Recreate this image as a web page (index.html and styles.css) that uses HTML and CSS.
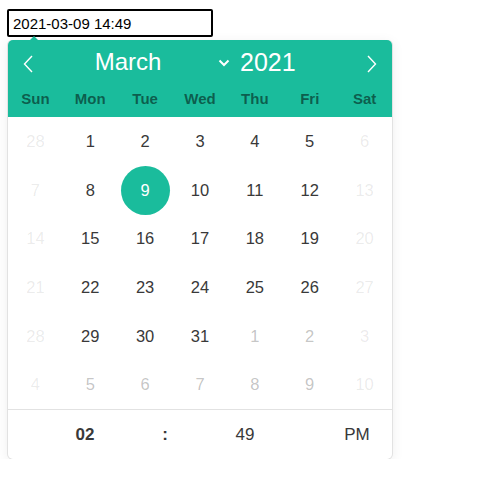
FILE: index.html
```html
<!DOCTYPE html>
<html lang="en">
<head>
  <meta charset="UTF-8" />
  <title>Date picker</title>
  <link rel="stylesheet" href="styles.css">
</head>
<body>
  <input type="text" class="date-input" value="2021-03-09 14:49">

  <div class="calendar">
    <div class="cal-header">
      <div class="month-nav">
        <span class="nav-arrow prev">
          <svg width="10" height="18" viewBox="0 0 10 18"><path d="M9 1 L1.5 9 L9 17" fill="none" stroke="#fff" stroke-width="1.4"/></svg>
        </span>
        <div class="current-month">
          <span class="month-name">March</span>
          <svg class="month-caret" width="12" height="8" viewBox="0 0 12 8"><path d="M1.5 1.5 L6 6 L10.5 1.5" fill="none" stroke="#fff" stroke-width="2"/></svg>
          <span class="year">2021</span>
        </div>
        <span class="nav-arrow next">
          <svg width="10" height="18" viewBox="0 0 10 18"><path d="M1 1 L8.5 9 L1 17" fill="none" stroke="#fff" stroke-width="1.4"/></svg>
        </span>
      </div>
      <div class="weekdays">
        <span>Sun</span><span>Mon</span><span>Tue</span><span>Wed</span><span>Thu</span><span>Fri</span><span>Sat</span>
      </div>
    </div>

    <div class="days">
      <span class="day disabled">28</span><span class="day">1</span><span class="day">2</span><span class="day">3</span><span class="day">4</span><span class="day">5</span><span class="day disabled">6</span>
      <span class="day disabled">7</span><span class="day">8</span><span class="day selected">9</span><span class="day">10</span><span class="day">11</span><span class="day">12</span><span class="day disabled">13</span>
      <span class="day disabled">14</span><span class="day">15</span><span class="day">16</span><span class="day">17</span><span class="day">18</span><span class="day">19</span><span class="day disabled">20</span>
      <span class="day disabled">21</span><span class="day">22</span><span class="day">23</span><span class="day">24</span><span class="day">25</span><span class="day">26</span><span class="day disabled">27</span>
      <span class="day disabled">28</span><span class="day">29</span><span class="day">30</span><span class="day">31</span><span class="day next-month">1</span><span class="day next-month">2</span><span class="day disabled">3</span>
      <span class="day disabled">4</span><span class="day next-month">5</span><span class="day next-month">6</span><span class="day next-month">7</span><span class="day next-month">8</span><span class="day next-month">9</span><span class="day disabled">10</span>
    </div>

    <div class="time">
      <span class="hour">02</span>
      <span class="separator">:</span>
      <span class="minute">49</span>
      <span class="ampm">PM</span>
    </div>
  </div>
</body>
</html>
```

FILE: styles.css
```css
body {
  margin: 0;
  padding: 9px 0 0 7px;
  font-family: "Liberation Sans", Arial, sans-serif;
  background-color: #ffffff;
}
.date-input {
  display: block;
  box-sizing: border-box;
  width: 206px;
  height: 28px;
  margin: 0;
  padding: 0 4px;
  border: 2px solid #000;
  border-radius: 2px;
  font-family: "Liberation Sans", Arial, sans-serif;
  font-size: 15px;
  color: #000;
}
.calendar {
  position: relative;
  width: 384px;
  margin: 3px 0 0 1px;
  background-color: #fff;
  border-radius: 5px;
  box-shadow: 1px 0 0 #e2e2e2, -1px 0 0 #e2e2e2, 0 1px 0 #dcdcdc, 0 3px 13px rgba(0,0,0,0.08);
}
.calendar::before {
  content: "";
  position: absolute;
  top: -4px;
  left: 22px;
  border-left: 4px solid transparent;
  border-right: 4px solid transparent;
  border-bottom: 4px solid #1abc9c;
}
.cal-header {
  background-color: #1abc9c;
  border-radius: 5px 5px 0 0;
}
.month-nav {
  display: flex;
  align-items: center;
  height: 42px;
  color: #fff;
}
.nav-arrow {
  display: flex;
  align-items: center;
  justify-content: center;
  width: 40px;
  height: 42px;
  padding-top: 6px;
  box-sizing: border-box;
}
.current-month {
  flex: 1;
  display: flex;
  align-items: center;
  padding-top: 2px;
}
.month-name {
  width: 160px;
  text-align: center;
  font-size: 24px;
}
.month-caret {
  margin: 2px 10px 0 10px;
}
.year {
  font-size: 25px;
}
.weekdays {
  display: grid;
  grid-template-columns: repeat(7, 1fr);
  height: 35px;
  align-items: center;
  padding-bottom: 2px;
  box-sizing: border-box;
}
.weekdays span {
  text-align: center;
  font-size: 15px;
  font-weight: bold;
  color: rgba(0,0,0,0.52);
}
.days {
  display: grid;
  grid-template-columns: repeat(7, 1fr);
  grid-auto-rows: 48.7px;
  align-items: center;
  justify-items: center;
}
.day {
  display: flex;
  align-items: center;
  justify-content: center;
  width: 49px;
  height: 49px;
  border-radius: 50%;
  font-size: 16.5px;
  color: #393939;
}
.day.disabled {
  color: rgba(57,57,57,0.1);
}
.day.next-month {
  color: rgba(57,57,57,0.3);
}
.day.selected {
  background-color: #1abc9c;
  color: #fff;
}
.time {
  display: grid;
  grid-template-columns: 154px 6px 154px 1fr;
  align-items: center;
  height: 49px;
  border-top: 1px solid #e2e2e2;
  font-size: 17px;
  color: #393939;
}
.time span {
  text-align: center;
}
.hour,
.separator {
  font-weight: bold;
}
```
